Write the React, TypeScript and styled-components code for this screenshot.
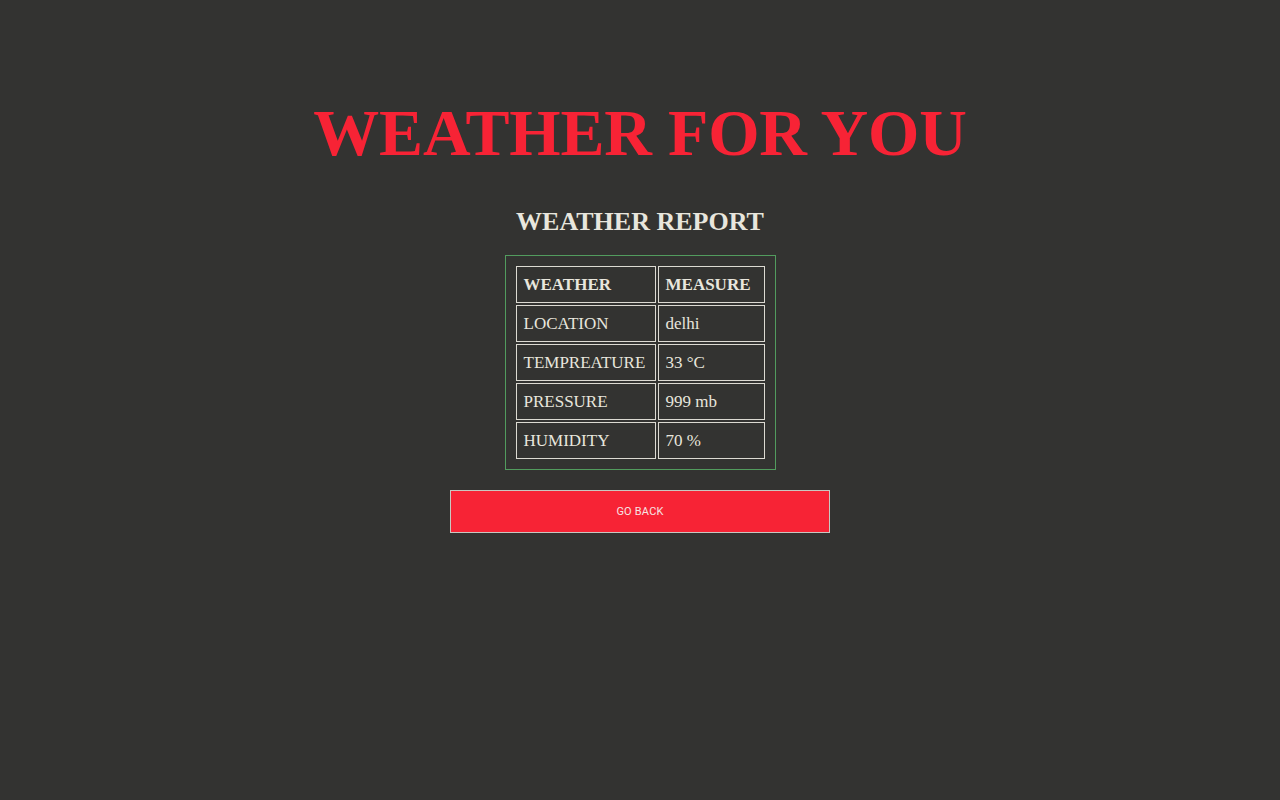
import React from 'react';
import styled, { createGlobalStyle } from 'styled-components';

const GlobalStyle = createGlobalStyle`
  html, body {
    margin: 0;
    padding: 0;
    background-color: #333331;
  }
  body {
    font-family: "Liberation Serif", "DejaVu Serif", serif;
    color: #e8e6dd;
  }
`;

const Page = styled.main`
  min-height: 800px;
  display: flex;
  flex-direction: column;
  align-items: center;
  padding-top: 95px;
  box-sizing: border-box;
`;

const Title = styled.h1`
  margin: 0;
  font-size: 66px;
  line-height: 76px;
  font-weight: 700;
  color: #f72335;
  letter-spacing: -0.2px;
`;

const SubTitle = styled.h2`
  margin: 36px 0 0;
  font-size: 26px;
  line-height: 30px;
  font-weight: 700;
  color: #e8e6dd;
`;

const ReportTable = styled.table`
  margin-top: 18px;
  border: 1px solid #529c5e;
  padding: 8px;
  border-spacing: 2px;
`;

const Cell = styled.td<{ $head?: boolean; $width?: number }>`
  box-sizing: border-box;
  width: ${(p) => (p.$width ? `${p.$width}px` : 'auto')};
  height: 37px;
  padding: 0 7px;
  border: 1px solid #dcdad2;
  font-size: 17px;
  line-height: 19px;
  font-weight: ${(p) => (p.$head ? 700 : 400)};
  text-align: left;
  color: #e8e6dd;
  white-space: nowrap;
`;

const BackButton = styled.button`
  margin-top: 20px;
  width: 380px;
  height: 43px;
  background-color: #f72335;
  border: 1px solid #c9c7c0;
  color: #f6e4e4;
  font-family: Roboto, "Liberation Sans", sans-serif;
  font-size: 11px;
  letter-spacing: 0.2px;
  text-transform: uppercase;
  cursor: pointer;
`;

const rows = [
  ['LOCATION', 'delhi'],
  ['TEMPREATURE', '33 °C'],
  ['PRESSURE', '999 mb'],
  ['HUMIDITY', '70 %'],
];

const App: React.FC = () => {
  return (
    <>
      <GlobalStyle />
      <Page>
        <Title>WEATHER FOR YOU</Title>
        <SubTitle>WEATHER REPORT</SubTitle>
        <ReportTable>
          <tbody>
            <tr>
              <Cell as="th" $head $width={140}>WEATHER</Cell>
              <Cell as="th" $head $width={107}>MEASURE</Cell>
            </tr>
            {rows.map(([name, value]) => (
              <tr key={name}>
                <Cell>{name}</Cell>
                <Cell>{value}</Cell>
              </tr>
            ))}
          </tbody>
        </ReportTable>
        <BackButton>Go back</BackButton>
      </Page>
    </>
  );
};

export default App;
